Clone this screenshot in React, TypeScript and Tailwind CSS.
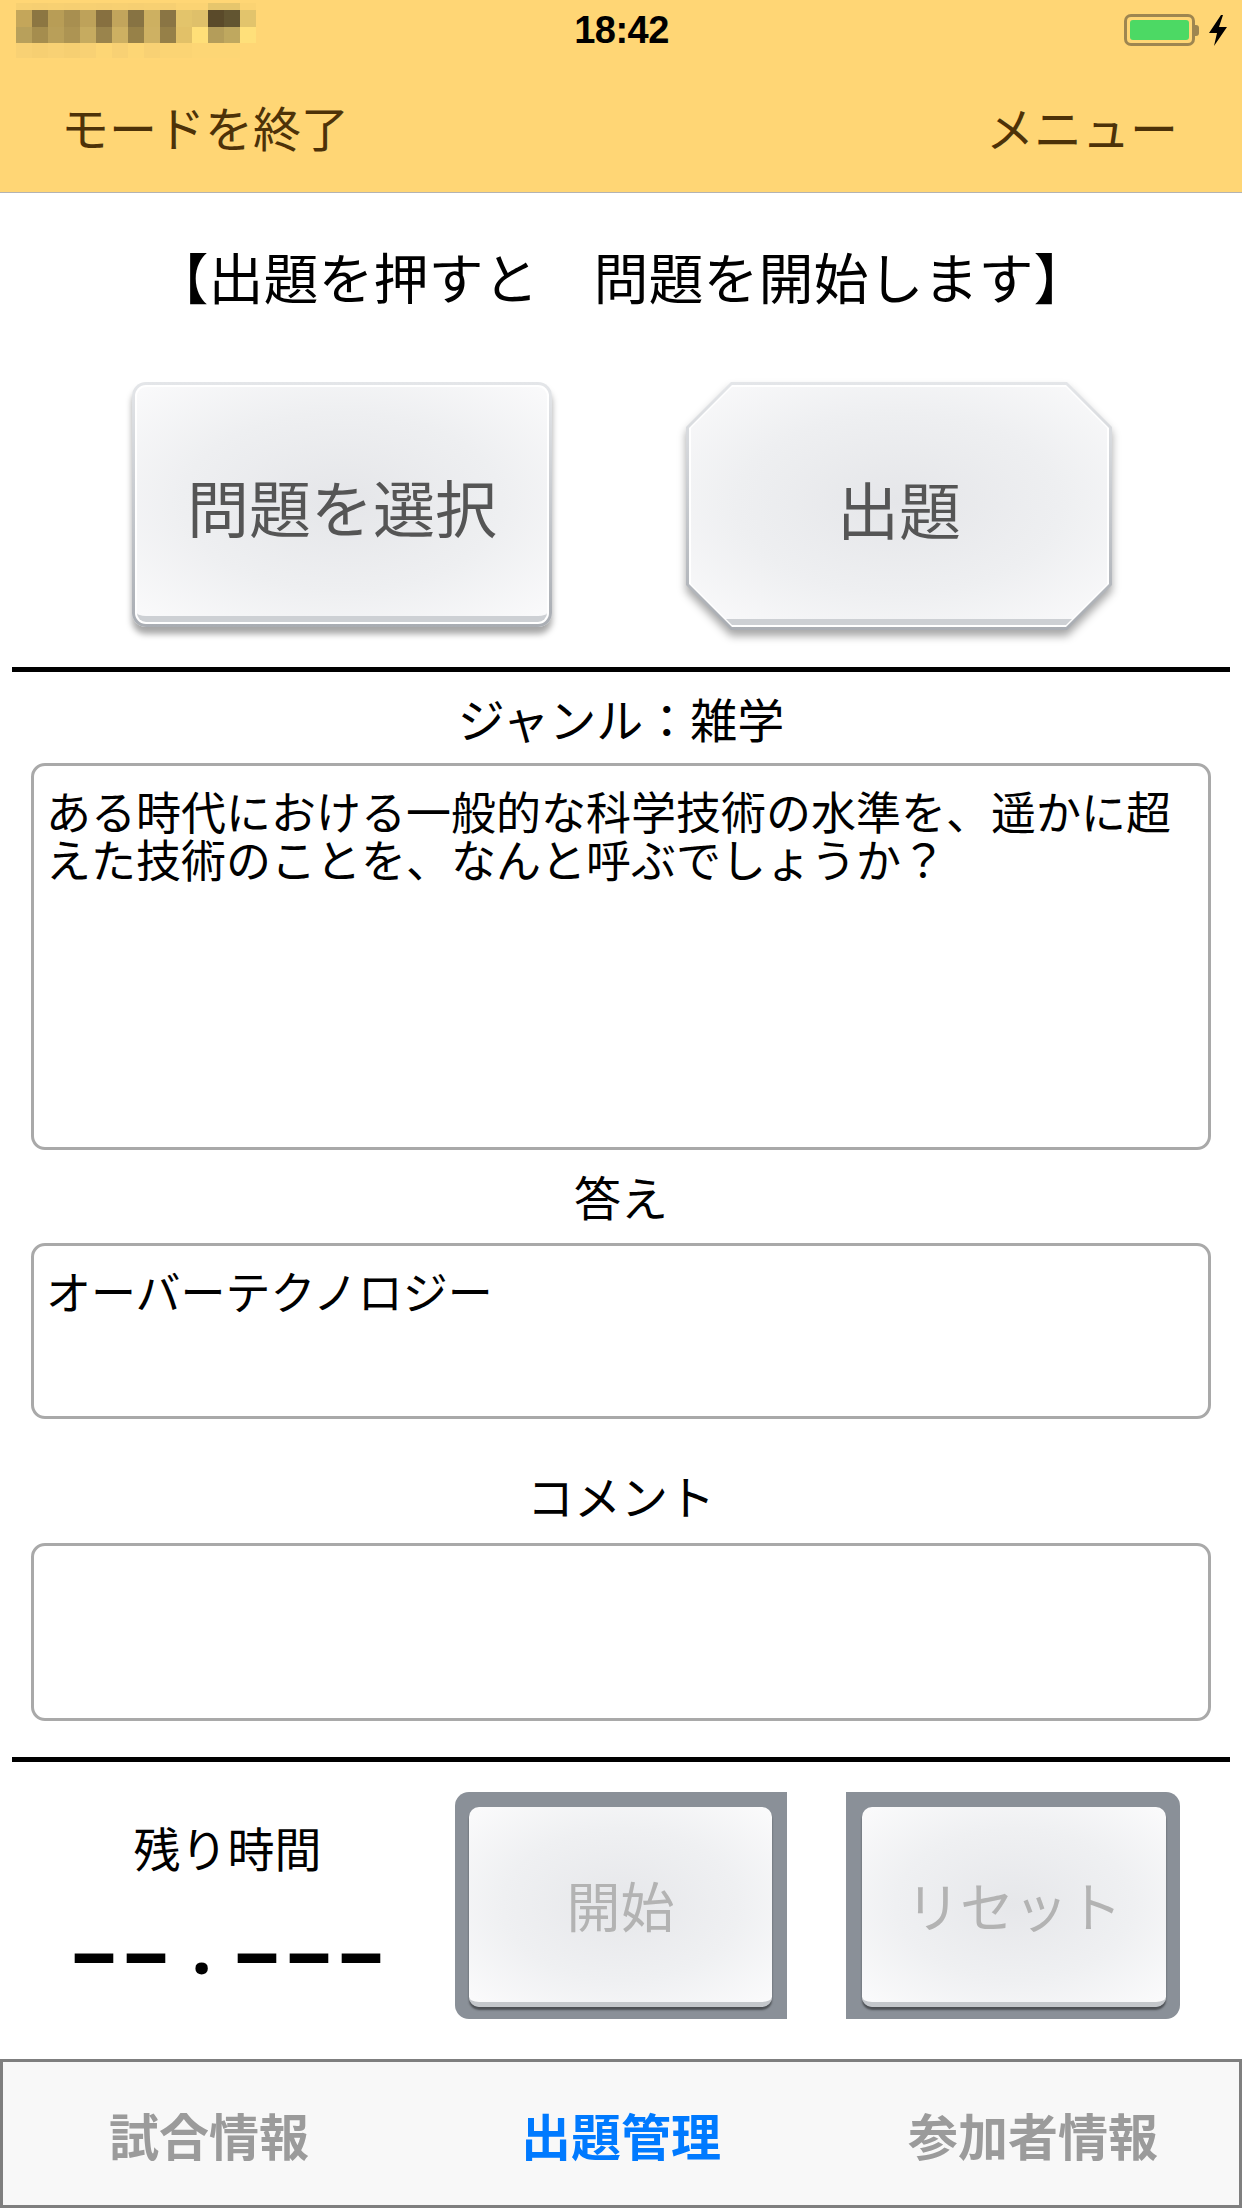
const carrierRows = [
  ['bg-[#f7d072]', 'bg-[#f6cf72]', 'bg-[#f7d072]', 'bg-[#f6cf72]', 'bg-[#f7d072]', 'bg-[#f6cf72]', 'bg-[#f7d072]', 'bg-[#f6cf72]', 'bg-[#f7d072]', 'bg-[#f6cf72]', 'bg-[#fbd373]', 'bg-[#fbd373]', 'bg-[#e6c66d]', 'bg-[#e6c66d]', 'bg-[#fbd373]'],
  ['bg-[#c4a65a]', 'bg-[#8c7642]', 'bg-[#b89d56]', 'bg-[#a88f50]', 'bg-[#bea25a]', 'bg-[#877040]', 'bg-[#c2a55c]', 'bg-[#877343]', 'bg-[#cdb061]', 'bg-[#8a7544]', 'bg-[#e3c46b]', 'bg-[#dfc06a]', 'bg-[#5a4a2a]', 'bg-[#625531]', 'bg-[#e2c46c]'],
  ['bg-[#b8a05b]', 'bg-[#a58d4e]', 'bg-[#b99f59]', 'bg-[#ad9453]', 'bg-[#c6ab60]', 'bg-[#9a844c]', 'bg-[#cdb062]', 'bg-[#978148]', 'bg-[#ceb163]', 'bg-[#968048]', 'bg-[#e2c168]', 'bg-[#ffdf78]', 'bg-[#b49d5a]', 'bg-[#bfa85f]', 'bg-[#ffe07a]'],
  ['bg-[#f8d174]', 'bg-[#f6cf72]', 'bg-[#f8d174]', 'bg-[#f6cf72]', 'bg-[#f8d174]', 'bg-[#fdd675]', 'bg-[#f8d174]', 'bg-[#fdd675]', 'bg-[#f8d174]', 'bg-[#fbd474]', 'bg-[#fbd474]', 'bg-[#fdd675]', 'bg-[#fdd675]', 'bg-[#fdd675]', 'bg-[#ffd675]'],
]
const rowHeights = ['h-[7px]', 'h-[17px]', 'h-[16px]', 'h-[15px]']

function StatusBar() {
  return (
    <div className="h-[60px] flex items-center">
      <div className="flex-1 pl-[16px]">
        <div className="flex flex-col">
          {carrierRows.map((row, i) => (
            <div key={i} className={`flex ${rowHeights[i]}`}>
              {row.map((c, j) => (
                <div key={j} className={`w-[16px] h-full ${c}`} />
              ))}
            </div>
          ))}
        </div>
      </div>
      <div className="font-['Liberation_Sans',sans-serif] font-bold text-[38px] leading-none tracking-[-0.5px]">
        18:42
      </div>
      <div className="flex-1 flex items-center justify-end pr-[15px]">
        <div className="w-[71px] h-[32px] border-[3px] border-[#9e8650] rounded-[7px] p-[3px]">
          <div className="h-full bg-[#4cd964] rounded-[3px]" />
        </div>
        <div className="w-[4px] h-[11px] bg-[#9e8650] rounded-r-[3px]" />
        <svg className="ml-[10px]" width="18" height="31" viewBox="0 0 18 31">
          <polygon points="12,0 0,18 8,18 5,31 18,12 10,12 14,0" fill="#000" />
        </svg>
      </div>
    </div>
  )
}

const octagon =
  '[clip-path:polygon(45px_0,calc(100%_-_45px)_0,100%_45px,100%_calc(100%_-_45px),calc(100%_-_45px)_100%,45px_100%,0_calc(100%_-_45px),0_45px)]'
const octagonMid =
  '[clip-path:polygon(43px_0,calc(100%_-_43px)_0,100%_43px,100%_calc(100%_-_43px),calc(100%_-_43px)_100%,43px_100%,0_calc(100%_-_43px),0_43px)]'
const octagonInner =
  '[clip-path:polygon(41px_0,calc(100%_-_41px)_0,100%_41px,100%_calc(100%_-_41px),calc(100%_-_41px)_100%,41px_100%,0_calc(100%_-_41px),0_41px)]'

function TextBox({ h, children }: { h: string; children?: React.ReactNode }) {
  return (
    <div
      className={`mx-[31px] ${h} border-[3px] border-[#a9a9a9] rounded-[14px] pt-[21px] px-[12px] text-[45px] leading-[48px]`}
    >
      {children}
    </div>
  )
}

function Dash() {
  return (
    <span className="inline-block w-[52px] text-center scale-x-[1.9] font-['Liberation_Sans',sans-serif] font-bold text-[80px] leading-none">
      -
    </span>
  )
}

export default function App() {
  return (
    <div className="w-[1242px] h-[2208px] flex flex-col bg-white text-black overflow-hidden font-['Noto_Sans_CJK_JP',sans-serif]">
      <header className="h-[193px] shrink-0 bg-[#ffd675] border-b border-[#b3b3b3]">
        <StatusBar />
        <div className="h-[132px] flex items-center justify-between pl-[61px] pr-[64px] text-[48px] text-[#4d3208]">
          <span>モードを終了</span>
          <span>メニュー</span>
        </div>
      </header>

      <p className="mt-[55px] text-center text-[55px] leading-none">【出題を押すと　問題を開始します】</p>

      <div className="mt-[79px] flex items-start pl-[132px] gap-[134px]">
        <div className="w-[420px] h-[245px] rounded-[14px] bg-linear-to-b from-[#e4e6e9] to-[#a9adb3] p-[3px] shadow-[0_7px_6px_rgba(0,0,0,0.35)]">
          <div className="h-full rounded-[11px] bg-white p-[2px]">
            <div className="h-full rounded-[9px] border-b-[6px] border-[#cdd0d4] bg-[radial-gradient(ellipse_at_center,#e5e6e9_0%,#eeeff1_55%,#fafafb_100%)] flex items-center justify-center pt-[10px] text-[62px] text-[#555]">
              問題を選択
            </div>
          </div>
        </div>
        <div className="drop-shadow-[0_6px_4px_rgba(0,0,0,0.35)]">
          <div className={`w-[426px] h-[248px] bg-linear-to-b from-[#e4e6e9] to-[#a9adb3] p-[3px] ${octagon}`}>
            <div className={`h-full bg-white p-[2px] ${octagonMid}`}>
              <div
                className={`h-full border-b-[6px] border-[#cdd0d4] bg-[radial-gradient(ellipse_at_center,#e5e6e9_0%,#eeeff1_55%,#fafafb_100%)] flex items-center justify-center pt-[10px] text-[62px] text-[#555] ${octagonInner}`}
              >
                出題
              </div>
            </div>
          </div>
        </div>
      </div>

      <div className="mt-[37px] mx-[12px] h-[5px] bg-black shrink-0" />

      <p className="mt-[22px] text-center text-[47px] leading-none">ジャンル：雑学</p>
      <div className="mt-[22px]">
        <TextBox h="h-[387px]">
          ある時代における一般的な科学技術の水準を、遥かに超えた技術のことを、なんと呼ぶでしょうか？
        </TextBox>
      </div>

      <p className="mt-[22px] text-center text-[47px] leading-none">答え</p>
      <div className="mt-[24px]">
        <TextBox h="h-[176px]">オーバーテクノロジー</TextBox>
      </div>

      <p className="mt-[52px] text-center text-[47px] leading-none">コメント</p>
      <div className="mt-[25px]">
        <TextBox h="h-[178px]" />
      </div>

      <div className="mt-[36px] mx-[12px] h-[5px] bg-black shrink-0" />

      <div className="mt-[30px] flex items-start">
        <div className="w-[455px] flex flex-col items-center">
          <p className="mt-[31px] text-[47px] leading-none">残り時間</p>
          <p className="mt-[40px] flex items-center">
            <Dash />
            <Dash />
            <span className="inline-block w-[59px] mb-[12px] text-center font-['Noto_Sans',sans-serif] font-bold text-[72px] leading-none">
              .
            </span>
            <Dash />
            <Dash />
            <Dash />
          </p>
        </div>
        <div className="w-[332px] h-[227px] rounded-l-[14px] bg-[#8a9098] pl-[14px] pr-[15px] pt-[15px] pb-[12px]">
          <div className="h-full rounded-[10px] border-b-[5px] border-[#c4c7cb] bg-[radial-gradient(ellipse_at_center,#e6e7ea_0%,#eff0f2_55%,#fbfbfc_100%)] shadow-[0_3px_2px_rgba(0,0,0,0.45)] flex items-center justify-center text-[54px] text-[#b3b3b3]">
            開始
          </div>
        </div>
        <div className="ml-[59px] w-[334px] h-[227px] rounded-r-[14px] bg-[#8a9098] pl-[16px] pr-[14px] pt-[15px] pb-[12px]">
          <div className="h-full rounded-[10px] border-b-[5px] border-[#c4c7cb] bg-[radial-gradient(ellipse_at_center,#e6e7ea_0%,#eff0f2_55%,#fbfbfc_100%)] shadow-[0_3px_2px_rgba(0,0,0,0.45)] flex items-center justify-center text-[54px] text-[#b3b3b3]">
            リセット
          </div>
        </div>
      </div>

      <nav className="mt-auto h-[149px] shrink-0 border-[3px] border-[#7f7f7f] bg-[#f8f8f8] grid grid-cols-3 items-center text-center text-[50px] font-bold leading-none">
        <span className="text-[#9b9b9b]">試合情報</span>
        <span className="text-[#007aff]">出題管理</span>
        <span className="text-[#9b9b9b]">参加者情報</span>
      </nav>
    </div>
  )
}
